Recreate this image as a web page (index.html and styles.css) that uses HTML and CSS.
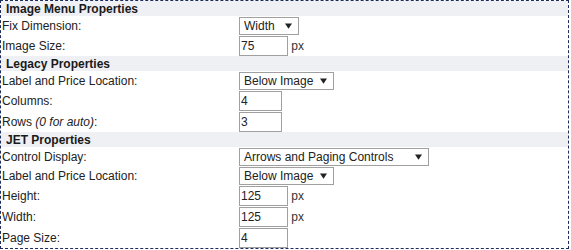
FILE: index.html
```html
<!DOCTYPE html>
<html lang="en">
<head>
    <meta charset="UTF-8">
    <title>Image Menu Properties</title>
    <link rel="stylesheet" href="styles.css">
</head>
<body>
    <div class="panel">
        <table class="props">
            <tr class="group"><th colspan="2">Image Menu Properties</th></tr>
            <tr>
                <td class="label">Fix Dimension:</td>
                <td><select class="sel sel-sm"><option>Width</option><option>Height</option></select></td>
            </tr>
            <tr>
                <td class="label">Image Size:</td>
                <td><input type="text" class="txt" value="75"> <span class="unit">px</span></td>
            </tr>

            <tr class="group"><th colspan="2">Legacy Properties</th></tr>
            <tr>
                <td class="label">Label and Price Location:</td>
                <td><select class="sel sel-md"><option>Below Image</option><option>Above Image</option></select></td>
            </tr>
            <tr>
                <td class="label">Columns:</td>
                <td><input type="text" class="txt txt-sm" value="4"></td>
            </tr>
            <tr>
                <td class="label">Rows <em>(0 for auto)</em>:</td>
                <td><input type="text" class="txt txt-sm" value="3"></td>
            </tr>

            <tr class="group"><th colspan="2">JET Properties</th></tr>
            <tr>
                <td class="label">Control Display:</td>
                <td><select class="sel sel-lg"><option>Arrows and Paging Controls</option><option>Arrows Only</option></select></td>
            </tr>
            <tr>
                <td class="label">Label and Price Location:</td>
                <td><select class="sel sel-md"><option>Below Image</option><option>Above Image</option></select></td>
            </tr>
            <tr>
                <td class="label">Height:</td>
                <td><input type="text" class="txt" value="125"> <span class="unit">px</span></td>
            </tr>
            <tr>
                <td class="label">Width:</td>
                <td><input type="text" class="txt" value="125"> <span class="unit">px</span></td>
            </tr>
            <tr>
                <td class="label">Page Size:</td>
                <td><input type="text" class="txt" value="4"></td>
            </tr>
        </table>
    </div>
</body>
</html>
```
FILE: styles.css
```css
body {
    margin: 0;
    font-family: "Liberation Sans", Arial, sans-serif;
    font-size: 12px;
    color: #222;
    background-color: #fff;
}

.panel {
    width: 567px;
    border: 1px dashed #1c2c5c;
}

.props {
    width: 100%;
    border-collapse: collapse;
}

.props td {
    padding: 0;
    vertical-align: middle;
}

.group th {
    height: 15px;
    padding: 0 5px;
    background-color: #eef0f4;
    text-align: left;
    font-weight: bold;
    color: #1a1a1a;
}

.label {
    width: 237px;
    padding-left: 1px !important;
}

.sel {
    display: block;
    height: 18px;
    margin-top: 1px;
    padding: 0 0 0 4px;
    border: 1px solid #a0a0a0;
    font-family: inherit;
    font-size: 12px;
    color: #222;
    background-color: #fff;
    appearance: none;
    background-image: url("data:image/svg+xml;charset=utf-8,%3Csvg xmlns='http://www.w3.org/2000/svg' viewBox='0 0 8 6'%3E%3Cpath d='M0 0h8L4 6z' fill='%23222'/%3E%3C/svg%3E");
    background-repeat: no-repeat;
    background-position: right 6px center;
    background-size: 7px 6px;
    box-sizing: border-box;
}

.sel-sm { width: 60px; }
.sel-md { width: 95px; }
.sel-lg { width: 190px; }

.txt {
    width: 49px;
    height: 20px;
    margin-top: 1px;
    padding: 0 1px;
    border: 1px solid #a0a0a0;
    font-family: inherit;
    font-size: 12px;
    color: #222;
    box-sizing: border-box;
    vertical-align: middle;
}

.txt-sm { width: 43px; }

.unit {
    color: #333;
    vertical-align: middle;
}
```
